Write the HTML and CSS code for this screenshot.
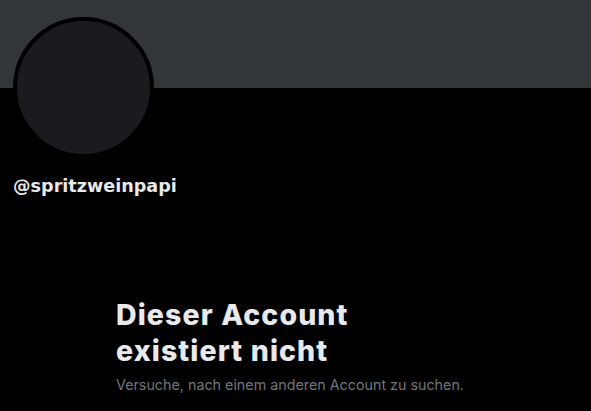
FILE: index.html
```html
<!DOCTYPE html>
<html lang="de">
<head>
<meta charset="utf-8">
<link rel="stylesheet" href="styles.css">
</head>
<body>
<div class="banner"></div>
<div class="profile">
  <div class="avatar"></div>
  <div class="handle">@spritzweinpapi</div>
</div>
<div class="empty">
  <h1 class="title">Dieser Account<br>existiert nicht</h1>
  <p class="sub">Versuche, nach einem anderen Account zu suchen.</p>
</div>
</body>
</html>
```
FILE: styles.css
```css
html, body {
  margin: 0;
  padding: 0;
  background: #000;
  height: 100%;
  overflow: hidden;
}
.banner {
  height: 88px;
  background: #333639;
}
.profile {
  padding-left: 13px;
}
.avatar {
  width: 133px;
  height: 133px;
  border: 4px solid #000;
  border-radius: 50%;
  background: #1a1b1e;
  margin-top: -71px;
}
.handle {
  margin-top: 17px;
  font-family: "DejaVu Sans", sans-serif;
  font-weight: bold;
  font-size: 17.6px;
  line-height: 22px;
  color: #e7e9ea;
}
.empty {
  margin: 100px 0 0 116px;
}
.title {
  margin: 0;
  font-family: Inter, sans-serif;
  font-weight: 800;
  font-size: 28.5px;
  line-height: 36px;
  color: #e7e9ea;
  letter-spacing: 1.1px;
}
.sub {
  margin: 6px 0 0;
  font-family: Inter, sans-serif;
  font-size: 14.3px;
  line-height: 20px;
  color: #71767b;
}
```
